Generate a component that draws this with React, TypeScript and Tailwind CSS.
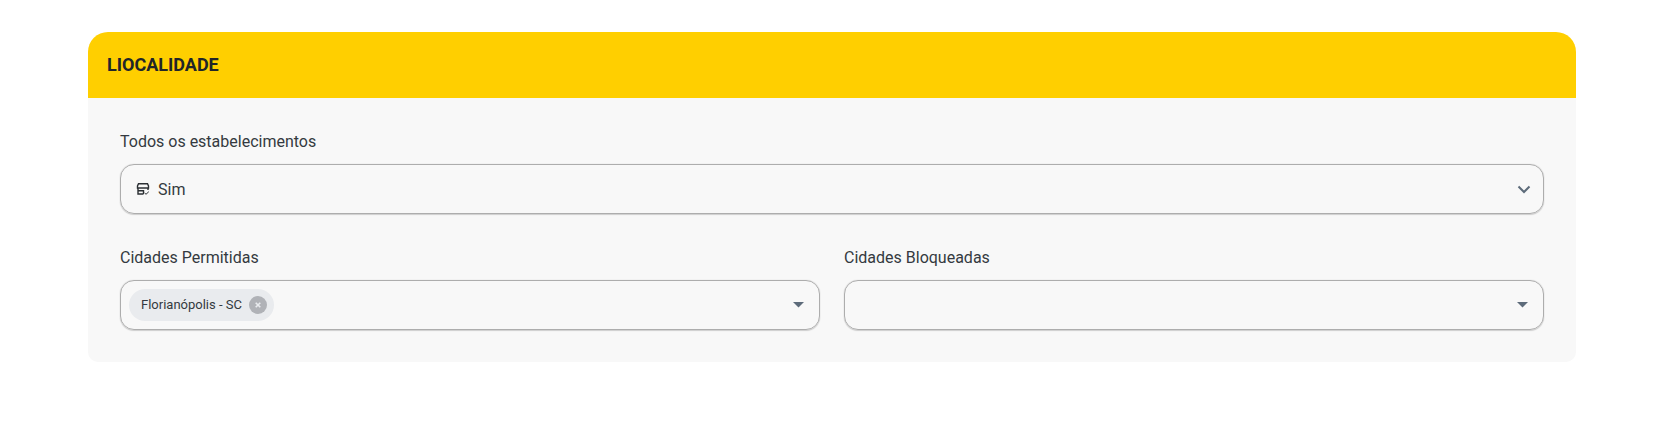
const font = { fontFamily: "Roboto, sans-serif" };

function Label({ children }: { children: string }) {
  return <label className="block h-[19px] text-[16px] leading-[19px] text-[#343a40]">{children}</label>;
}

function Box({ children }: { children: React.ReactNode }) {
  return (
    <div className="mt-[13px] flex h-[50px] items-center rounded-[14px] border border-[#adadad] shadow-[0_0_1px_#c0c0c0,0_1px_1px_#d0d0d0]">
      {children}
    </div>
  );
}

function Caret() {
  return (
    <svg width="11" height="6" viewBox="0 0 11 6" className="ml-auto mr-[15px]">
      <path d="M0 0H11L5.5 5.5Z" fill="#5d6b7a" />
    </svg>
  );
}

export default function App() {
  return (
    <div className="min-h-[422px] bg-white pt-[32px]" style={font}>
      <div className="mx-[88px] w-[1488px]">
        {/* Header */}
        <div className="flex h-[66px] items-center rounded-t-[20px] bg-[#ffcf00] pb-[2px] pl-[19px]">
          <h2 className="text-[18px] font-bold text-[#212529]">LIOCALIDADE</h2>
        </div>

        <div className="rounded-b-[10px] bg-[#f8f8f8] px-[32px] pt-[34px] pb-[32px]">
          <Label>Todos os estabelecimentos</Label>
          <Box>
            <svg width="14" height="14" viewBox="0 0 14 14" fill="none" stroke="#2b2f33" strokeWidth="1.4" className="ml-[15px]">
              <path d="M2.5 1.7H11.5L12.5 4V6H1.5V4Z" />
              <path d="M2 6V12H7.5M12 6V8" />
              <path d="M2 8.7H7.5V12" />
              <path d="M8.7 11L10 12.3L12.8 9.7" strokeWidth="1" />
            </svg>
            <span className="ml-[8px] pt-[2px] text-[16px] text-[#343a40]">Sim</span>
            <svg width="14" height="9" viewBox="0 0 14 9" fill="none" stroke="#5d6b7a" strokeWidth="2" className="ml-auto mr-[12px]">
              <path d="M1.5 1.5L7 7L12.5 1.5" />
            </svg>
          </Box>

          <div className="mt-[34px] grid grid-cols-2 gap-[24px]">
            <div>
              <Label>Cidades Permitidas</Label>
              <Box>
                <span className="ml-[8px] flex h-[32px] items-center rounded-full bg-[#e9ebee] pl-[12px] pr-[7px] text-[13px] text-[#343a40]">
                  Florianópolis - SC
                  <span className="ml-[7px] flex h-[18px] w-[18px] items-center justify-center rounded-full bg-[#b0b2b7]">
                    <svg width="6" height="6" viewBox="0 0 6 6" stroke="#e9ebee" strokeWidth="1.6">
                      <path d="M0.7 0.7L5.3 5.3M5.3 0.7L0.7 5.3" />
                    </svg>
                  </span>
                </span>
                <Caret />
              </Box>
            </div>
            <div>
              <Label>Cidades Bloqueadas</Label>
              <Box>
                <Caret />
              </Box>
            </div>
          </div>
        </div>
      </div>
    </div>
  );
}
